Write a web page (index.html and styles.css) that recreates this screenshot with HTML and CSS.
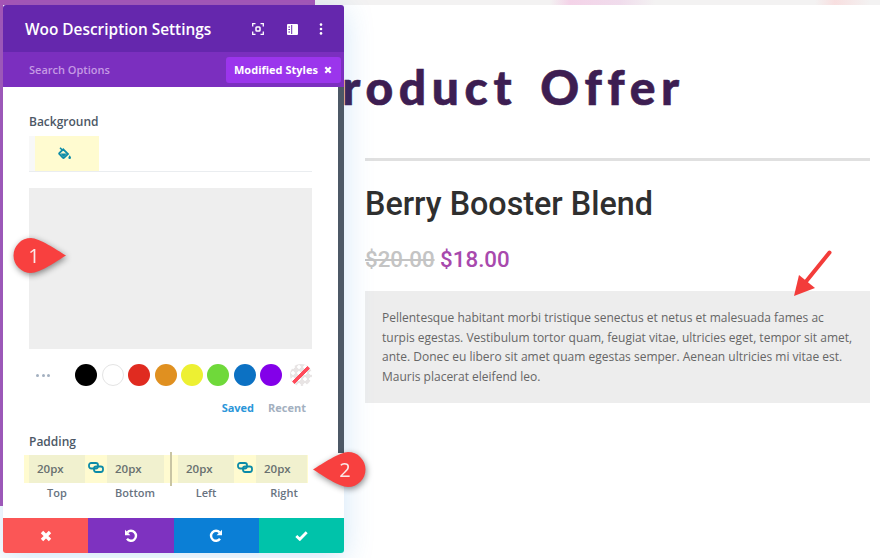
FILE: index.html
```html
<!DOCTYPE html>
<html>
<head>
    <meta charset="UTF-8">
    <meta name="viewport" content="width=device-width, initial-scale=1.0">
    <title>Woo Description Settings</title>
    <link rel="stylesheet" href="styles.css">
</head>
<body>
    <div class="stage">
        <div class="top-strip"></div>
        <div class="page-row">
            <div class="left-edge"></div>
            <main class="content">
                <h1 class="offer-title">Product Offer</h1>
                <hr class="rule">
                <h2 class="product-name">Berry Booster Blend</h2>
                <p class="price"><s class="price-old">$20.00</s> <span class="price-new">$18.00</span></p>
                <div class="description">Pellentesque habitant morbi tristique senectus et netus et malesuada fames ac turpis egestas. Vestibulum tortor quam, feugiat vitae, ultricies eget, tempor sit amet, ante. Donec eu libero sit amet quam egestas semper. Aenean ultricies mi vitae est. Mauris placerat eleifend leo.</div>
            </main>
        </div>

        <!-- Settings modal -->
        <section class="panel">
            <header class="panel-head">
                <span class="panel-title">Woo Description Settings</span>
                <svg class="head-icon icon-focus" width="12" height="12" viewBox="0 0 12 12" fill="none" stroke="#fff" stroke-width="1.300">
                    <path d="M.7 3.500V.7h2.800M8.500.7h2.800v2.800M11.300 8.500v2.800H8.500M3.500 11.300H.7V8.500"/>
                    <rect x="4" y="4" width="4" height="4" rx=".8" stroke-width="1.500"/>
                </svg>
                <svg class="head-icon icon-split" width="11" height="11" viewBox="0 0 11 11">
                    <path fill="#fff" fill-rule="evenodd" d="M1 0h9a1 1 0 0 1 1 1v9a1 1 0 0 1-1 1H1a1 1 0 0 1-1-1V1a1 1 0 0 1 1-1zm3.200 1v9h1V1zM1.400 2.400v1.200h1.600V2.400zm0 2.500v1.200h1.600V4.900zm0 2.500v1.200h1.600V7.400z"/>
                </svg>
                <svg class="head-icon icon-more" width="4" height="12" viewBox="0 0 4 12" fill="#fff">
                    <circle cx="2" cy="1.600" r="1.300"/><circle cx="2" cy="6" r="1.300"/><circle cx="2" cy="10.400" r="1.300"/>
                </svg>
            </header>
            <div class="panel-tabs">
                <span class="search-label">Search Options</span>
                <span class="filter-chip">Modified Styles
                    <svg width="8" height="8" viewBox="0 0 8 8"><path d="M1.300 1.300l5.400 5.400M6.700 1.300L1.300 6.700" stroke="#fff" stroke-width="2.200"/></svg>
                </span>
            </div>

            <div class="panel-body">
                <div class="panel-inner">
                    <label class="field-label">Background</label>
                    <div class="bg-tabs">
                        <div class="bg-tab">
                            <svg width="14" height="13" viewBox="0 0 14 13" fill="none">
                                <path d="M2 .8l2.300 2.300" stroke="#0c8ba8" stroke-width="1.500"/>
                                <path d="M5.300 2.300L10 7l-3.800 3.600a1 1 0 0 1-1.400 0L1.500 7.200a1 1 0 0 1 0-1.400z" stroke="#0c8ba8" stroke-width="1.800"/>
                                <path d="M2.500 6.600h6.300L6 9.700H5z" fill="#0c8ba8"/>
                                <path d="M11.700 8.200c.8 1.200 1.300 1.900 1.300 2.600a1.300 1.300 0 0 1-2.600 0c0-.7.500-1.400 1.300-2.600z" fill="#0c8ba8"/>
                            </svg>
                        </div>
                    </div>
                    <div class="color-field"></div>

                    <div class="swatches">
                        <span class="more-dots"><i></i><i></i><i></i></span>
                        <span class="swatch swatch-black"></span>
                        <span class="swatch swatch-white"></span>
                        <span class="swatch swatch-red"></span>
                        <span class="swatch swatch-orange"></span>
                        <span class="swatch swatch-yellow"></span>
                        <span class="swatch swatch-green"></span>
                        <span class="swatch swatch-blue"></span>
                        <span class="swatch swatch-purple"></span>
                        <span class="swatch swatch-none"></span>
                    </div>
                    <div class="palette-tabs">
                        <span class="palette-saved">Saved</span>
                        <span class="palette-recent">Recent</span>
                    </div>

                    <label class="field-label padding-label">Padding</label>
                </div>

                <div class="padding-row">
                    <span class="pad-input pad-top">20px</span>
                    <svg class="link-icon" width="16" height="11" viewBox="0 0 16 11" fill="none" stroke="#0c8ba8" stroke-width="1.800"><rect x="1" y="1" width="9" height="5.500" rx="2.200"/><rect x="6" y="4.500" width="9" height="5.500" rx="2.200"/></svg>
                    <span class="pad-input pad-bottom">20px</span>
                    <span class="pad-divider"></span>
                    <span class="pad-input pad-left">20px</span>
                    <svg class="link-icon" width="16" height="11" viewBox="0 0 16 11" fill="none" stroke="#0c8ba8" stroke-width="1.800"><rect x="1" y="1" width="9" height="5.500" rx="2.200"/><rect x="6" y="4.500" width="9" height="5.500" rx="2.200"/></svg>
                    <span class="pad-input pad-right">20px</span>
                </div>
                <div class="padding-names">
                    <span class="name-top">Top</span>
                    <span class="name-bottom">Bottom</span>
                    <span class="name-left">Left</span>
                    <span class="name-right">Right</span>
                </div>
                <div class="scrollbar"></div>
            </div>

            <footer class="panel-foot">
                <button class="foot-btn btn-cancel">
                    <svg width="12" height="12" viewBox="0 0 12 12"><path d="M2 2l8 8M10 2l-8 8" stroke="#fff" stroke-width="3.400"/></svg>
                </button>
                <button class="foot-btn btn-undo">
                    <svg width="14" height="14" viewBox="0 0 14 14" fill="none"><path d="M3.300 3.400A5 5 0 1 1 3 9.800" stroke="#fff" stroke-width="2.400"/><path d="M1 .8v5.400h5.400z" fill="#fff"/></svg>
                </button>
                <button class="foot-btn btn-redo">
                    <svg width="14" height="14" viewBox="0 0 14 14" fill="none"><path d="M10.700 3.400a5 5 0 1 0 .3 6.400" stroke="#fff" stroke-width="2.400"/><path d="M13 .8v5.400H7.600z" fill="#fff"/></svg>
                </button>
                <button class="foot-btn btn-save">
                    <svg width="13" height="10" viewBox="0 0 13 10" fill="none"><path d="M1.300 5l3.500 3.300 6.900-7" stroke="#fff" stroke-width="2.800"/></svg>
                </button>
            </footer>
        </section>

        <!-- Annotations -->
        <div class="callout callout-one">
            <svg width="54" height="36" viewBox="0 0 54 36"><path d="M18 0c8 0 26 12 35 17.500C44 23 27 35 18 35A17.500 17.500 0 0 1 18 0z" fill="#f8403f"/></svg>
            <span class="callout-num">1</span>
        </div>
        <div class="callout callout-two">
            <svg width="54" height="36" viewBox="0 0 54 36"><path d="M36 0C28 0 10 12 1 17.500 10 23 27 35 36 35a17.500 17.500 0 0 0 0-35z" fill="#f8403f"/></svg>
            <span class="callout-num">2</span>
        </div>
        <svg class="arrow" width="40" height="48" viewBox="0 0 40 48">
            <path d="M37.500 2.500L12 34" stroke="#f33c3a" stroke-width="4" stroke-linecap="round"/>
            <path d="M2 46l5-21 16 13z" fill="#f33c3a"/>
        </svg>
    </div>
</body>
</html>
```

FILE: styles.css
```css
* {
    box-sizing: border-box;
}
html, body {
    margin: 0;
    padding: 0;
}
body {
    font-family: 'Open Sans', sans-serif;
    background: #fff;
    color: #666;
    overflow: hidden;
}
.stage {
    position: relative;
    width: 880px;
    height: 558px;
    overflow: hidden;
}
.top-strip {
    height: 5px;
    background: linear-gradient(90deg, #a953b4 0, #a953b4 315px, #f3f2f2 315px, #f3f2f2 550px, #f4d3e8 570px, #f0dcec 620px, #f3f2f2 655px, #f3f2f2 815px, #f8dfe0 835px, #f3f2f2 870px);
}
.page-row {
    display: flex;
}
.left-edge {
    width: 3px;
    height: 501px;
    background: #a953b4;
}
.content {
    margin-left: 362px;
    width: 505px;
}

/* page content */
.offer-title {
    margin: 56px 0 0 -58px;
    font-family: Lato, sans-serif;
    font-weight: 900;
    font-size: 48px;
    line-height: 52px;
    letter-spacing: 5.600px;
    word-spacing: 6px;
    -webkit-text-stroke: .6px #3d1e52;
    color: #3d1e52;
    white-space: nowrap;
}
.rule {
    height: 3px;
    margin: 45px 0 0;
    border: 0;
    background: #e0e0e0;
}
.product-name {
    margin: 22px 0 0;
    font-family: Roboto, sans-serif;
    font-weight: 500;
    font-size: 32.300px;
    line-height: 42px;
    color: #2f2f2f;
}
.price {
    margin: 19px 0 0;
    font-family: Roboto, sans-serif;
    font-weight: 500;
    font-size: 22.300px;
    line-height: 30px;
}
.price-old {
    color: #c4c4c4;
}
.price-new {
    color: #a849ad;
}
.description {
    margin-top: 17px;
    padding: 17px 17px 16px 17px;
    background: #ededed;
    font-size: 12px;
    line-height: 19.700px;
    color: #666;
}

/* settings panel */
.panel {
    position: absolute;
    left: 3px;
    top: 5px;
    width: 341px;
    height: 548px;
    display: flex;
    flex-direction: column;
    border-radius: 3px;
    background: #fff;
    box-shadow: 0 5px 30px rgba(43,135,218,.22);
}
.panel-head {
    height: 47px;
    display: flex;
    align-items: center;
    padding: 1px 21px 0 22px;
    background: #6527ad;
    border-radius: 3px 3px 0 0;
}
.panel-title {
    flex: 1;
    font-size: 15.400px;
    font-weight: 600;
    color: #fff;
}
.head-icon {
    display: block;
}
.icon-split {
    margin-left: 22.500px;
}
.icon-more {
    margin-left: 21.500px;
}
.panel-tabs {
    height: 35px;
    display: flex;
    align-items: center;
    justify-content: space-between;
    padding: 0 3px 0 26px;
    background: #7b2fbf;
}
.search-label {
    font-size: 11px;
    font-weight: 600;
    color: #c59ae4;
}
.filter-chip {
    width: 115px;
    height: 26px;
    display: flex;
    align-items: center;
    justify-content: space-between;
    padding: 0 9px 0 8px;
    background: #9b35ec;
    border-radius: 3px;
    font-size: 11px;
    font-weight: 700;
    color: #fff;
}
.panel-body {
    position: relative;
    flex: 1;
    padding-top: 26px;
}
.panel-inner {
    padding: 0 26px;
    width: 335px;
}
.field-label {
    display: block;
    font-size: 12px;
    font-weight: 600;
    line-height: 18px;
    color: #4c5866;
}
.bg-tabs {
    margin-top: 5px;
    border-bottom: 1px solid #eaedf0;
    padding-left: 6px;
    background: linear-gradient(90deg, #f8f8f8 6px, transparent 6px);
}
.bg-tab {
    width: 64px;
    height: 35px;
    display: flex;
    align-items: center;
    justify-content: center;
    padding-right: 4px;
    background: #fffbd0;
}
.color-field {
    height: 161px;
    margin-top: 16px;
    background: #eee;
}
.swatches {
    display: flex;
    align-items: center;
    margin-top: 15px;
    height: 22px;
    gap: 4.400px;
}
.more-dots {
    width: 42px;
    display: flex;
    gap: 2.500px;
    padding-left: 7px;
}
.more-dots i {
    width: 3px;
    height: 3px;
    border-radius: 50%;
    background: #a3b0c0;
}
.swatch {
    width: 22px;
    height: 22px;
    border-radius: 50%;
    flex: none;
}
.swatch-black { background: #000; }
.swatch-white { background: #fff; border: 1px solid #e4e4e4; }
.swatch-red { background: #e02b20; }
.swatch-orange { background: #e09020; }
.swatch-yellow { background: #edf032; }
.swatch-green { background: #6fd93a; }
.swatch-blue { background: #0c71c3; }
.swatch-purple { background: #8300e9; }
.swatch-none {
    margin-left: 3px;
    background:
        linear-gradient(135deg, transparent 45%, #ff4a5a 45% 55%, transparent 55%),
        radial-gradient(circle, #fff 1.500px, transparent 2px) 0 0 / 6px 6px,
        #e8e4e4;
}
.palette-tabs {
    display: flex;
    justify-content: flex-end;
    gap: 14px;
    margin: 14px 6px 0 0;
    font-size: 11px;
    font-weight: 700;
    line-height: 16px;
}
.palette-saved {
    color: #2b96d9;
}
.palette-recent {
    color: #a3b0c0;
}
.padding-label {
    margin-top: 17px;
}
.padding-row {
    position: relative;
    width: 284px;
    height: 28px;
    margin: 4px 0 0 21px;
    display: flex;
    align-items: center;
    padding-left: 5px;
    background: #fffbd0;
}
.pad-input {
    height: 28px;
    padding-left: 8px;
    background: #f1f1cf;
    font-size: 11.500px;
    font-weight: 600;
    line-height: 28px;
    color: #68706f;
}
.pad-top { width: 56px; }
.pad-bottom { width: 57px; }
.pad-left { width: 56px; }
.pad-right { width: 51px; }
.link-icon {
    width: 22px;
    flex: none;
    margin-bottom: 4px;
}
.pad-divider {
    width: 14px;
    height: 34px;
    flex: none;
    background: linear-gradient(90deg, transparent 6.500px, #c9c5a4 6.500px, #c9c5a4 8px, transparent 8px);
}
.padding-names {
    display: flex;
    width: 312px;
    margin-left: 21px;
    padding-top: 2px;
    font-size: 11px;
    font-weight: 600;
    line-height: 16px;
    color: #68737f;
    text-align: center;
}
.padding-names span {
    flex: none;
}
.name-top { width: 66px; }
.name-bottom { width: 90px; }
.name-left { width: 52px; }
.name-right { width: 104px; }
.scrollbar {
    position: absolute;
    top: 0;
    right: 0;
    width: 6px;
    height: 366px;
    background: #4c5866;
}
.panel-foot {
    height: 35px;
    display: grid;
    grid-template-columns: repeat(4, 1fr);
}
.foot-btn {
    display: flex;
    align-items: center;
    justify-content: center;
    padding: 0;
    border: 0;
}
.btn-cancel { background: #fb5656; border-radius: 0 0 0 3px; }
.btn-undo { background: #7e32c0; }
.btn-redo { background: #0b7fd6; }
.btn-save { background: #00c3aa; border-radius: 0 0 3px 0; }

/* annotations */
.callout {
    position: absolute;
    width: 54px;
    height: 36px;
    filter: drop-shadow(1px 2px 3px rgba(0,0,0,.45));
}
.callout svg {
    display: block;
}
.callout-one {
    left: 13px;
    top: 238px;
}
.callout-two {
    left: 312px;
    top: 452px;
}
.callout-num {
    position: absolute;
    top: 0;
    width: 36px;
    font-family: 'Open Sans', sans-serif;
    font-size: 20px;
    line-height: 36px;
    text-align: center;
    color: #fbe9e9;
}
.callout-one .callout-num {
    left: 3px;
}
.callout-two .callout-num {
    left: 15px;
}
.arrow {
    position: absolute;
    left: 792px;
    top: 250px;
}
```
